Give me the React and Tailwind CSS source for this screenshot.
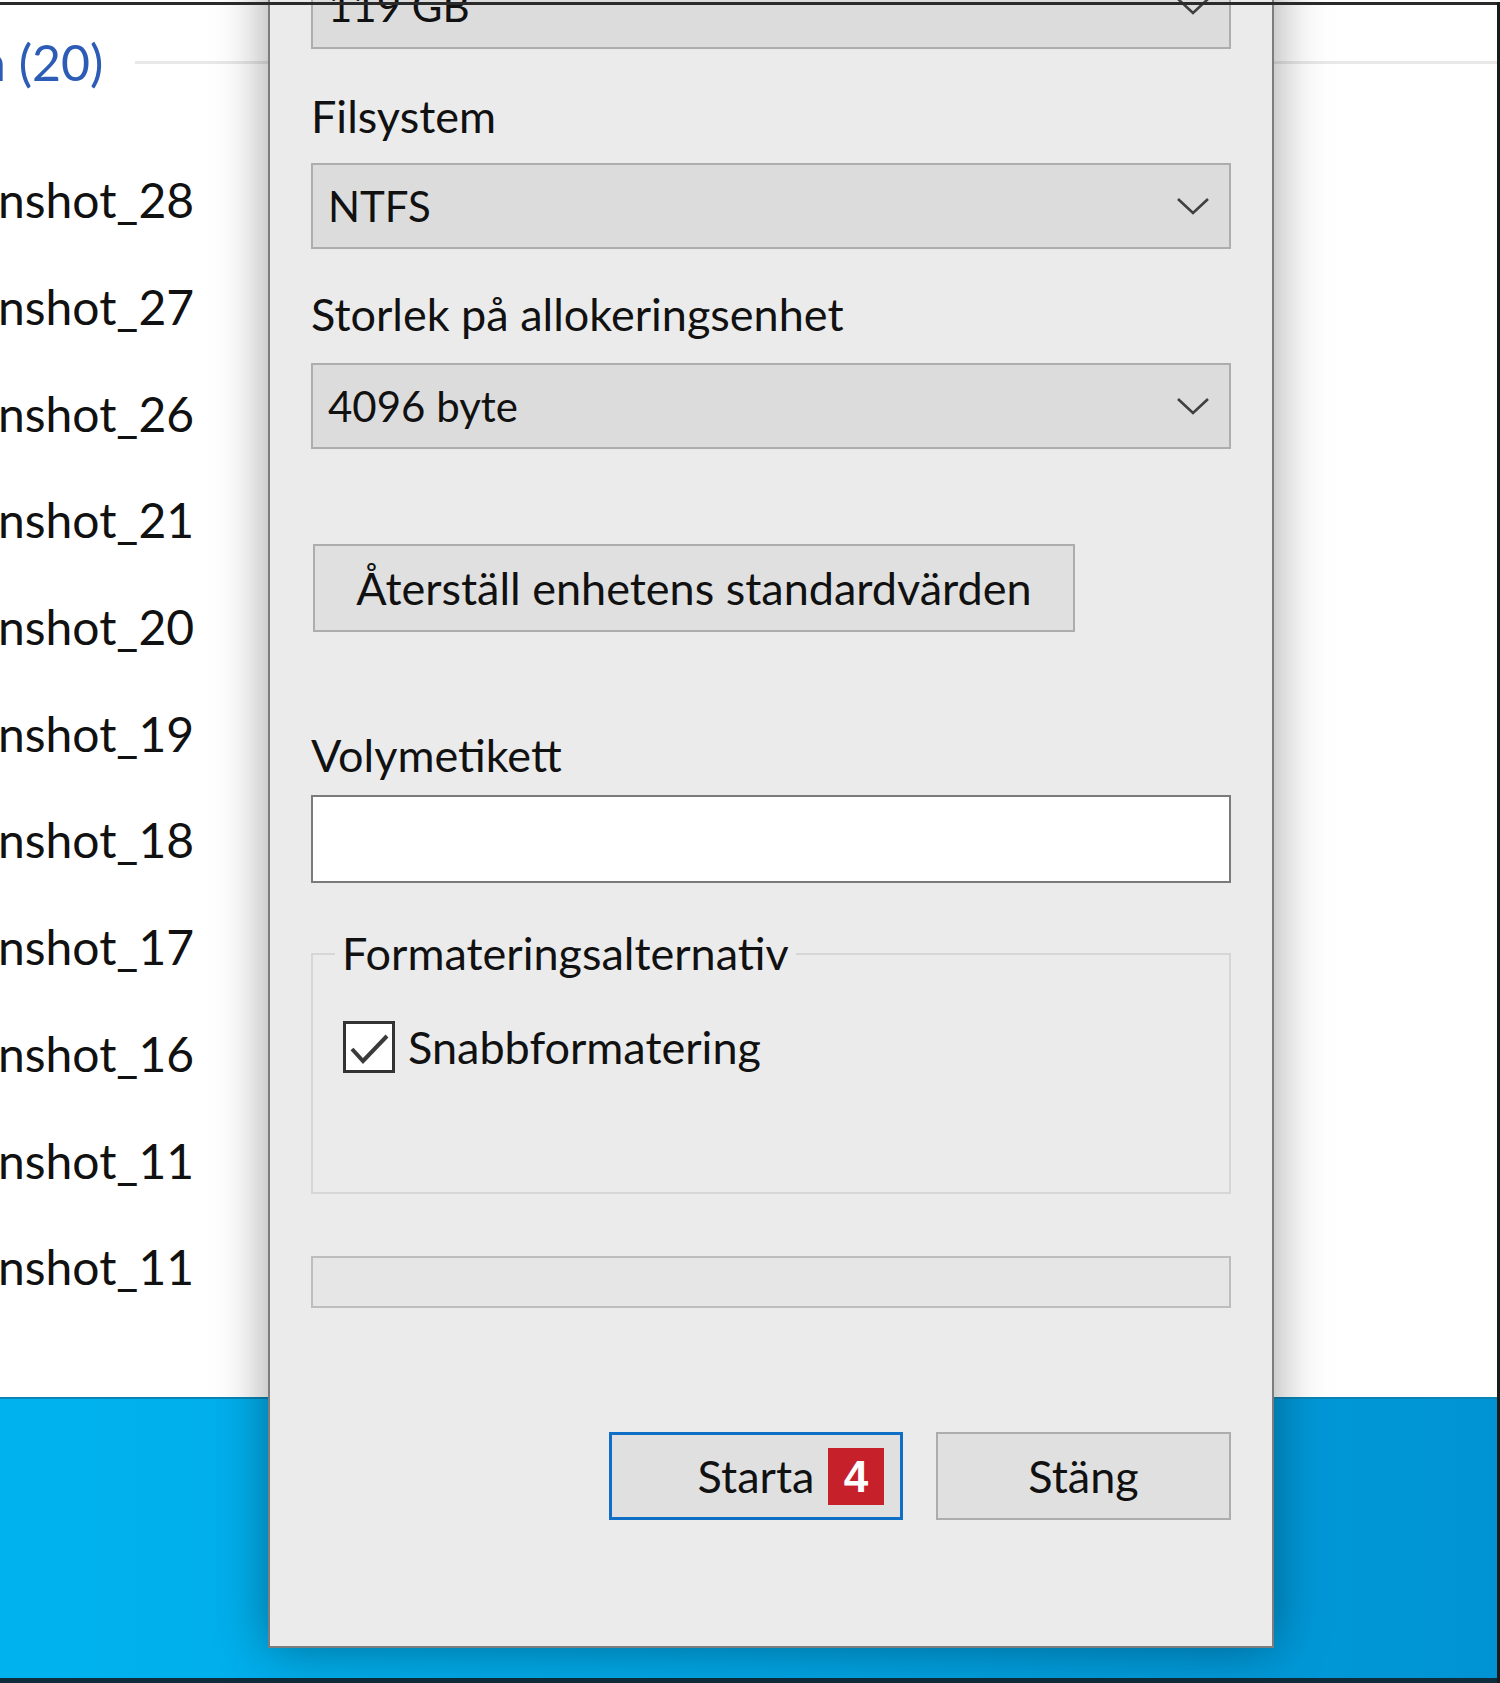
import React from "react";

const Chevron = () => (
  <svg width="34" height="18" viewBox="0 0 34 18" className="shrink-0">
    <polyline points="2,2 17,16 32,2" fill="none" stroke="#404040" strokeWidth="2.6" />
  </svg>
);

const Combo = ({ value, className = "" }) => (
  <div className={`h-[86px] border-2 border-[#adadad] bg-[#dcdcdc] flex items-center justify-between pl-[15px] pr-[19px] ${className}`}>
    <span className="text-[42px] leading-[50px] text-[#111]">{value}</span>
    <Chevron />
  </div>
);

const Label = ({ children, className = "" }) => (
  <div className={`text-[45px] leading-[50px] text-[#111] ${className}`}>{children}</div>
);

export default function App() {
  const files = [
    "nshot_28",
    "nshot_27",
    "nshot_26",
    "nshot_21",
    "nshot_20",
    "nshot_19",
    "nshot_18",
    "nshot_17",
    "nshot_16",
    "nshot_11",
    "nshot_11",
  ];
  return (
    <div className="relative w-[1500px] h-[1683px] overflow-hidden bg-white font-['Lato','Noto_Sans',sans-serif]">
      <div className="flex flex-col h-full">
        {/* Explorer window */}
        <div className="h-[1397px] bg-white flex flex-col">
          <div className="h-[124px] flex items-center">
            <span className="text-[50px] leading-[60px] text-[#2c5cb5] ml-[-22px] whitespace-nowrap">n (20)</span>
            <div className="flex-1 h-[3px] bg-[#e8e8e8] ml-[32px]" />
          </div>
          <div className="flex flex-col mt-[23px]">
            {files.map((f, i) => (
              <div key={i} className="h-[106.7px] flex items-center text-[48px] leading-[60px] text-[#111] ml-[-2px] whitespace-nowrap">
                {f}
              </div>
            ))}
          </div>
        </div>
        {/* Taskbar */}
        <div className="flex-1 bg-gradient-to-r from-[#00b3ef] via-[#00a6e6] to-[#0093d3] border-t-2 border-t-[#0a84b4] border-b-[5px] border-b-[#0e2c3b]" />
      </div>

      {/* Format dialog */}
      <div className="absolute left-[268px] top-[-100px] w-[1006px] bg-[#ebebeb] border-2 border-[#7d7d7d] shadow-[0_0_50px_rgba(0,0,0,0.38)] pt-[61px] px-[41px] pb-[126px] flex flex-col">
        <Combo value="119 GB" />
        <Label className="mt-[42px]">Filsystem</Label>
        <Combo value="NTFS" className="mt-[22px]" />
        <Label className="mt-[40px]">Storlek på allokeringsenhet</Label>
        <Combo value="4096 byte" className="mt-[24px]" />
        <div className="mt-[95px] ml-[2px] w-[762px] h-[88px] border-2 border-[#adadad] bg-[#e0e0e0] flex items-center justify-center text-[45px] leading-[50px] text-[#111]">
          Återställ enhetens standardvärden
        </div>
        <Label className="mt-[98px]">Volymetikett</Label>
        <div className="mt-[15px] h-[88px] border-2 border-[#7a7a7a] bg-white" />
        <div className="relative mt-[70px] h-[241px] border-2 border-[#d6d6d6] pt-[66px] pl-[30px]">
          <div className="absolute left-[22px] top-[-27px] px-[7px] bg-[#ebebeb] text-[45px] leading-[50px] text-[#111]">
            Formateringsalternativ
          </div>
          <div className="flex items-center gap-[13px]">
            <div className="w-[52px] h-[52px] border-[3px] border-[#333] bg-white flex items-center justify-center">
              <svg width="46" height="46" viewBox="0 0 46 46">
                <polyline points="6,25 17,37 41,12" fill="none" stroke="#3a3a3a" strokeWidth="4" />
              </svg>
            </div>
            <span className="text-[45px] leading-[50px] text-[#111]">Snabbformatering</span>
          </div>
        </div>
        <div className="mt-[62px] h-[52px] border-2 border-[#bdbdbd] bg-[#e6e6e6]" />
        <div className="mt-[124px] flex justify-end gap-[33px]">
          <div className="relative w-[294px] h-[88px] border-[3px] border-[#0f6fc6] bg-[#e0e0e0] flex items-center justify-center text-[45px] leading-[50px] text-[#111]">
            Starta
            <div className="absolute left-[216px] top-[13px] w-[56px] h-[57px] bg-[#c6202a] flex items-center justify-center text-white font-bold text-[44px] leading-none font-['Liberation_Sans',sans-serif]">
              4
            </div>
          </div>
          <div className="w-[295px] h-[88px] border-2 border-[#adadad] bg-[#e0e0e0] flex items-center justify-center text-[45px] leading-[50px] text-[#111]">
            Stäng
          </div>
        </div>
      </div>

      {/* screenshot frame lines */}
      <div className="absolute left-0 right-0 top-[2px] h-[3px] bg-[#2a2a2a]" />
      <div className="absolute right-0 top-[2px] bottom-0 w-[3px] bg-[#1a1a1a]" />
    </div>
  );
}
